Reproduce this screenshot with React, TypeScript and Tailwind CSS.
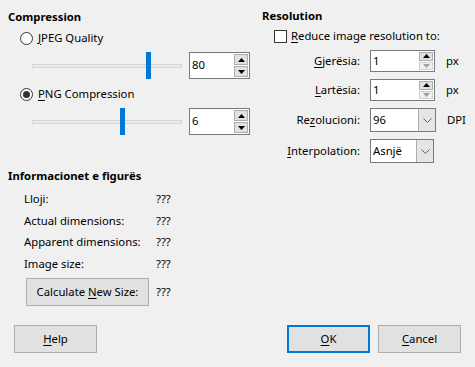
import React from "react";

const font = { fontFamily: '"Noto Sans", "Liberation Sans", sans-serif' };

function U({ children }: { children: React.ReactNode }) {
  return <span className="underline underline-offset-2">{children}</span>;
}

function Radio({ checked }: { checked?: boolean }) {
  return (
    <span className="flex h-[13px] w-[13px] items-center justify-center rounded-full border border-[#333] bg-white">
      {checked && <span className="h-[7px] w-[7px] rounded-full bg-[#333]" />}
    </span>
  );
}

function Slider({ pos }: { pos: number }) {
  return (
    <div className="relative h-[27px] w-[150px]">
      <div className="absolute left-0 right-0 top-[12px] h-[4px] border border-[#d6d6d6] bg-[#e7eaea]" />
      <div
        className="absolute top-0 h-[27px] w-[5px] bg-[#0078d7]"
        style={{ left: pos }}
      />
    </div>
  );
}

function Arrow({ up, dim }: { up?: boolean; dim?: boolean }) {
  return (
    <svg width="7" height="4" viewBox="0 0 7 4">
      <path
        d={up ? "M0 4 L3.5 0 L7 4 Z" : "M0 0 L3.5 4 L7 0 Z"}
        fill={dim ? "#a0a0a0" : "#000"}
      />
    </svg>
  );
}

function Spin({
  value,
  w,
  h,
  downDim,
}: {
  value: string;
  w: string;
  h: string;
  downDim?: boolean;
}) {
  return (
    <div className={`flex border border-[#7a7a7a] bg-white ${w} ${h}`}>
      <div className="flex flex-1 items-center pl-[2px]">{value}</div>
      <div className="flex w-[16px] flex-col gap-[1px] p-[1px]">
        <div className="flex flex-1 items-center justify-center border border-[#adadad] bg-[#e1e1e1]">
          <Arrow up />
        </div>
        <div
          className={`flex flex-1 items-center justify-center border ${downDim ? "border-[#d0d0d0] bg-[#f0f0f0]" : "border-[#adadad] bg-[#e1e1e1]"}`}
        >
          <Arrow dim={downDim} />
        </div>
      </div>
    </div>
  );
}

function Combo({ value, w }: { value: string; w: string }) {
  return (
    <div className={`flex h-[24px] border border-[#7a7a7a] bg-white ${w}`}>
      <div className="flex flex-1 items-center pl-[2px]">{value}</div>
      <div className="flex w-[17px] items-center justify-center border-l border-[#adadad] bg-[#e5e5e5]">
        <svg width="9" height="5" viewBox="0 0 9 5">
          <path d="M0.5 0.5 L4.5 4.5 L8.5 0.5" fill="none" stroke="#606060" strokeWidth="1" />
        </svg>
      </div>
    </div>
  );
}

function FormRow({
  label,
  children,
  unit,
  h,
}: {
  label: React.ReactNode;
  children: React.ReactNode;
  unit?: string;
  h: string;
}) {
  return (
    <div className={`flex items-center ${h}`}>
      <div className="w-[108px] pr-[10px] text-right">{label}</div>
      {children}
      <span className="ml-[11px]">{unit}</span>
    </div>
  );
}

function Btn({
  children,
  w,
  primary,
}: {
  children: React.ReactNode;
  w: string;
  primary?: boolean;
}) {
  return (
    <div
      className={`flex h-[28px] items-center justify-center bg-[#e1e1e1] ${w} ${primary ? "border-2 border-[#0078d7]" : "border border-[#adadad]"}`}
    >
      {children}
    </div>
  );
}

export default function App() {
  return (
    <div
      className="flex h-[367px] w-[475px] flex-col bg-[#f0f0f0] text-[11.3px] text-black"
      style={font}
    >
      <div className="flex h-[163px] pt-2">
        {/* compression */}
        <div className="flex w-[262px] flex-col pl-2">
          <div className="flex h-[18px] items-center font-bold">Compression</div>
          <div className="flex h-[24px] items-center gap-[5px] pl-[12px]">
            <Radio />
            <span>
              <U>J</U>PEG Quality
            </span>
          </div>
          <div className="mt-[2px] flex items-center pl-[24px]">
            <Slider pos={114} />
            <div className="ml-[7px]">
              <Spin value="80" w="w-[61px]" h="h-[27px]" />
            </div>
          </div>
          <div className="mt-[3px] flex h-[24px] items-center gap-[5px] pl-[12px]">
            <Radio checked />
            <span>
              <U>P</U>NG Compression
            </span>
          </div>
          <div className="mt-[2px] flex items-center pl-[24px]">
            <Slider pos={88} />
            <div className="ml-[7px]">
              <Spin value="6" w="w-[61px]" h="h-[27px]" />
            </div>
          </div>
        </div>

        {/* resolution */}
        <div className="flex flex-1 flex-col">
          <div className="flex h-[18px] items-center font-bold">Resolution</div>
          <div className="flex h-[24px] items-center gap-[4px] pl-[12px]">
            <span className="h-[13px] w-[13px] border border-[#333] bg-white" />
            <span>
              <U>R</U>educe image resolution to:
            </span>
          </div>
          <div className="mt-[2px] flex flex-col gap-[7px]">
            <FormRow
              h="h-[22px]"
              unit="px"
              label={
                <>
                  <U>G</U>jerësia:
                </>
              }
            >
              <Spin value="1" w="w-[65px]" h="h-[22px]" downDim />
            </FormRow>
            <FormRow
              h="h-[22px]"
              unit="px"
              label={
                <>
                  <U>L</U>artësia:
                </>
              }
            >
              <Spin value="1" w="w-[65px]" h="h-[22px]" downDim />
            </FormRow>
            <FormRow
              h="h-[24px]"
              unit="DPI"
              label={
                <>
                  Re<U>z</U>olucioni:
                </>
              }
            >
              <Combo value="96" w="w-[66px]" />
            </FormRow>
            <FormRow
              h="h-[24px]"
              label={
                <>
                  <U>I</U>nterpolation:
                </>
              }
            >
              <Combo value="Asnjë" w="w-[64px]" />
            </FormRow>
          </div>
        </div>
      </div>

      {/* image info */}
      <div className="mt-[4px] flex flex-col pl-2">
        <div className="flex h-[18px] items-center font-bold">Informacionet e figurës</div>
        <div className="mt-[4px] flex flex-col pl-[16px]">
          {["Lloji:", "Actual dimensions:", "Apparent dimensions:", "Image size:"].map((l) => (
            <div key={l} className="flex h-[21.5px] items-center">
              <span className="w-[132px]">{l}</span>
              <span>???</span>
            </div>
          ))}
          <div className="mt-[3px] flex items-center">
            <div className="ml-[2px]">
              <Btn w="w-[123px]">
                <span>
                  Calculate <U>N</U>ew Size:
                </span>
              </Btn>
            </div>
            <span className="ml-[7px]">???</span>
          </div>
        </div>
      </div>

      {/* buttons */}
      <div className="mt-[19px] flex px-[14px]">
        <Btn w="w-[83px]">
          <span>
            <U>H</U>elp
          </span>
        </Btn>
        <div className="flex-1" />
        <Btn w="w-[83px]" primary>
          <span>
            <U>O</U>K
          </span>
        </Btn>
        <div className="ml-[8px]">
          <Btn w="w-[83px]">
            <span>
              <U>C</U>ancel
            </span>
          </Btn>
        </div>
      </div>
    </div>
  );
}
